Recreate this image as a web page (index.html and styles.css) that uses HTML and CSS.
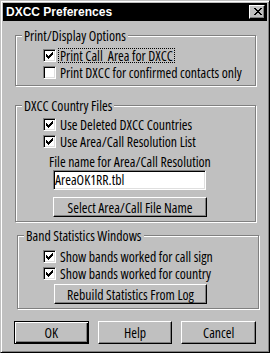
FILE: index.html
```html
<!DOCTYPE html>
<html>
<head>
<meta charset="utf-8">
<link rel="stylesheet" href="styles.css">
</head>
<body>
<div class="window">
  <div class="titlebar">
    <span class="title">DXCC Preferences</span>
    <span class="close"><svg class="xglyph" width="8" height="7" viewBox="0 0 8 7" shape-rendering="crispEdges"><path d="M0 0h2v1h-2zM6 0h2v1h-2zM1 1h2v1h-2zM5 1h2v1h-2zM2 2h4v1h-4zM3 3h2v1h-2zM2 4h4v1h-4zM1 5h2v1h-2zM5 5h2v1h-2zM0 6h2v1h-2zM6 6h2v1h-2z" fill="#000"/></svg></span>
  </div>
  <div class="content">
    <fieldset class="group g1">
      <legend>Print/Display Options</legend>
      <div class="gbody">
        <div class="row"><span class="check"><svg width="7" height="7" viewBox="0 0 7 7" shape-rendering="crispEdges"><path d="M6 0h1v1h-1zM5 1h2v1h-2zM0 2h1v1h-1zM4 2h3v1h-3zM0 3h2v1h-2zM3 3h3v1h-3zM0 4h5v1h-5zM1 5h3v1h-3zM2 6h1v1h-1z" fill="#000"/></svg></span><span class="lbl focus">Print Call&nbsp; Area for DXCC</span></div>
        <div class="row"><span class="check"></span><span class="lbl">Print DXCC for confirmed contacts only</span></div>
      </div>
    </fieldset>
    <fieldset class="group g2">
      <legend>DXCC Country Files</legend>
      <div class="gbody">
        <div class="row"><span class="check"><svg width="7" height="7" viewBox="0 0 7 7" shape-rendering="crispEdges"><path d="M6 0h1v1h-1zM5 1h2v1h-2zM0 2h1v1h-1zM4 2h3v1h-3zM0 3h2v1h-2zM3 3h3v1h-3zM0 4h5v1h-5zM1 5h3v1h-3zM2 6h1v1h-1z" fill="#000"/></svg></span><span class="lbl">Use Deleted DXCC Countries</span></div>
        <div class="row"><span class="check"><svg width="7" height="7" viewBox="0 0 7 7" shape-rendering="crispEdges"><path d="M6 0h1v1h-1zM5 1h2v1h-2zM0 2h1v1h-1zM4 2h3v1h-3zM0 3h2v1h-2zM3 3h3v1h-3zM0 4h5v1h-5zM1 5h3v1h-3zM2 6h1v1h-1z" fill="#000"/></svg></span><span class="lbl">Use Area/Call Resolution List</span></div>
        <div class="filelabel">File name for Area/Call Resolution</div>
        <div class="edit">AreaOK1RR.tbl</div>
        <div class="btn selbtn">Select Area/Call File Name</div>
      </div>
    </fieldset>
    <fieldset class="group g3">
      <legend>Band Statistics Windows</legend>
      <div class="gbody">
        <div class="row"><span class="check"><svg width="7" height="7" viewBox="0 0 7 7" shape-rendering="crispEdges"><path d="M6 0h1v1h-1zM5 1h2v1h-2zM0 2h1v1h-1zM4 2h3v1h-3zM0 3h2v1h-2zM3 3h3v1h-3zM0 4h5v1h-5zM1 5h3v1h-3zM2 6h1v1h-1z" fill="#000"/></svg></span><span class="lbl">Show bands worked for call sign</span></div>
        <div class="row"><span class="check"><svg width="7" height="7" viewBox="0 0 7 7" shape-rendering="crispEdges"><path d="M6 0h1v1h-1zM5 1h2v1h-2zM0 2h1v1h-1zM4 2h3v1h-3zM0 3h2v1h-2zM3 3h3v1h-3zM0 4h5v1h-5zM1 5h3v1h-3zM2 6h1v1h-1z" fill="#000"/></svg></span><span class="lbl">Show bands worked for country</span></div>
        <div class="btn rebuildbtn">Rebuild Statistics From Log</div>
      </div>
    </fieldset>
    <div class="buttons">
      <div class="btn dlgbtn default">OK</div>
      <div class="btn dlgbtn">Help</div>
      <div class="btn dlgbtn">Cancel</div>
    </div>
  </div>
</div>
</body>
</html>
```
FILE: styles.css
```css
html, body {
  margin: 0;
  padding: 0;
  background: #c0c0c0;
}
.window {
  width: 270px;
  height: 353px;
  box-sizing: border-box;
  border: 1px solid;
  border-color: #c0c0c0 #000 #000 #c0c0c0;
  box-shadow: inset 1px 1px 0 #fff, inset -1px -1px 0 #808080;
  padding: 2px;
  background: #c0c0c0;
  display: flex;
  flex-direction: column;
  font-family: "Open Sans", "Liberation Sans", Arial, sans-serif;
  font-stretch: 75%;
  font-size: 13.8px;
  color: #000;
}
.titlebar {
  height: 18px;
  background: #000;
  color: #fff;
  display: flex;
  align-items: center;
  justify-content: space-between;
  padding: 0 2px 0 3px;
}
.title {
  font-family: "Liberation Sans", Arial, sans-serif;
  font-stretch: 100%;
  font-weight: bold;
  font-size: 12px;
  line-height: 14px;
}
.close {
  width: 16px;
  height: 14px;
  box-sizing: border-box;
  background: #c0c0c0;
  border: 1px solid;
  border-color: #fff #000 #000 #fff;
  box-shadow: inset -1px -1px 0 #808080;
  padding: 2px 0 0 4px;
}
.xglyph { display: block; }
.content {
  padding: 8px 11px 0 12px;
  display: flex;
  flex-direction: column;
}
.group {
  margin: 0;
  padding: 0;
  min-width: 0;
  border: 1px solid #808080;
  box-shadow: 1px 1px 0 #fff, inset 1px 1px 0 #fff;
}
.group legend {
  margin-left: 6px;
  padding: 0 2px;
  line-height: 13px;
  background: #c0c0c0;
}
.g2 { margin-top: 13px; }
.g3 { margin: 7px -3px 0 2px; }
.gbody {
  display: flex;
  flex-direction: column;
  align-items: flex-start;
  padding: 5px 0 4px 27px;
}
.g2 .gbody { padding-top: 4px; }
.g3 .gbody { padding: 6px 0 4px 25px; }
.row {
  height: 17px;
  display: flex;
  align-items: center;
}
.check {
  width: 13px;
  height: 13px;
  box-sizing: border-box;
  border: 1px solid;
  border-color: #808080 #fff #fff #808080;
  box-shadow: inset 1px 1px 0 #000, inset -1px -1px 0 #dfdfdf;
  background: #fff;
  padding: 2px;
  flex: none;
}
.check svg { display: block; }
.lbl {
  margin-left: 3px;
  padding: 0 1px;
  line-height: 13px;
  white-space: nowrap;
}
.focus { outline: 1px dotted #000; }
.filelabel {
  margin: 5px 0 0 6px;
  line-height: 13px;
  white-space: nowrap;
}
.edit {
  margin: 2px 0 0 10px;
  width: 153px;
  height: 20px;
  box-sizing: border-box;
  border: 1px solid;
  border-color: #808080 #fff #fff #808080;
  box-shadow: inset 1px 1px 0 #000, inset -1px -1px 0 #dfdfdf;
  background: #fff;
  padding: 0 2px 0 1px;
  line-height: 18px;
}
.btn {
  box-sizing: border-box;
  border: 1px solid;
  border-color: #fff #000 #000 #fff;
  box-shadow: inset -1px -1px 0 #808080;
  display: flex;
  align-items: center;
  justify-content: center;
  white-space: nowrap;
  line-height: 13px;
}
.selbtn {
  margin: 7px 0 0 10px;
  width: 154px;
  height: 20px;
}
.rebuildbtn {
  margin: 2px 0 0 11px;
  width: 153px;
  height: 20px;
}
.buttons {
  margin: 12px 0 0 -1px;
  display: flex;
  gap: 9px;
}
.dlgbtn {
  width: 75px;
  height: 23px;
}
.default {
  border-color: #000;
  box-shadow: inset 1px 1px 0 #fff, inset -1px -1px 0 #000, inset -2px -2px 0 #808080;
}
```
